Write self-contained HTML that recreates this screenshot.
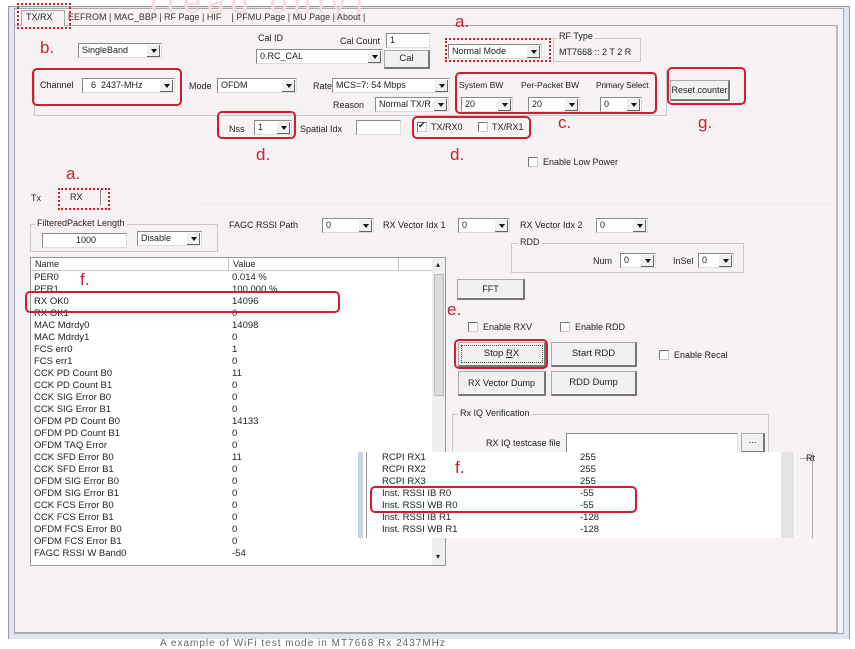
<!DOCTYPE html>
<html><head><meta charset="utf-8"><style>
*{box-sizing:border-box;margin:0;padding:0}
body{width:855px;height:644px;overflow:hidden;background:#fff;font-family:"Liberation Sans",sans-serif;font-size:9px;color:#222;position:relative}
.a{position:absolute;white-space:nowrap}
.cb{position:absolute;background:#fff;border:1px solid #8a8a8a;border-right-color:#ddd;border-bottom-color:#ddd;height:15px;font-size:9px;line-height:13px;padding-left:3px;overflow:hidden;white-space:nowrap}
.cb:after{content:"";position:absolute;right:1px;top:1px;width:12px;height:11px;background:#f0f0f0;border-right:1px solid #666;border-bottom:1px solid #666}
.cb:before{content:"";position:absolute;right:4px;top:5px;border:3px solid transparent;border-top:4px solid #111;z-index:2}
.tb{position:absolute;background:#fff;border:1px solid #8a8a8a;border-right-color:#ddd;border-bottom-color:#ddd;height:15px;font-size:9px;line-height:13px;padding:0 3px}
.bt{position:absolute;background:#f2f0f1;border:1px solid #aaa;border-right:2px solid #777;border-bottom:2px solid #777;text-align:center;font-size:9.5px;white-space:nowrap}
.gb{position:absolute;border:1px solid #c8c8c8}
.gl{position:absolute;background:#f7f3f5;padding:0 2px;font-size:9px;white-space:nowrap}
.ck{position:absolute;width:10px;height:10px;border:1px solid #777;border-right-color:#ccc;border-bottom-color:#ccc;background:#fff}
.r{position:absolute;border:2px solid #cc2030;border-radius:5px}
.rd{position:absolute;border:2px dotted #cc2030}
.lt{position:absolute;color:#cc2030;font-size:17px;font-family:"Liberation Sans",sans-serif}
.row{position:absolute;height:12px;line-height:12px;font-size:9.5px;white-space:nowrap}
</style></head><body>
<div class="a" style="left:8px;top:6px;width:842px;height:634px;background:#dfe6ef;border:1px solid #999"></div>
<div class="a" style="left:14px;top:8px;width:830px;height:626px;background:#f7f3f5;border:1px solid #aaa"></div>
<div class="a" style="left:14px;top:25px;width:824px;height:608px;border:1px solid #a8a8a8;border-right:2px solid #bbb"></div>
<div class="a" style="left:0;top:0;width:855px;height:6px;background:#fff"></div>
<div class="a" style="left:150px;top:-16px;font-size:32px;color:#f6dede;letter-spacing:6px">(read only)</div>
<div class="a" style="left:21px;top:10px;width:44px;height:16px;background:#f7f3f5;border:1px solid #aaa;border-bottom:none"></div>
<div class="a" style="left:26px;top:12px;font-size:9px">TX/RX</div>
<div class="a" style="left:68px;top:12px;font-size:9px;color:#333">EEFROM | MAC_BBP | RF Page | HIF &nbsp;&nbsp; | PFMU Page | MU Page | About |</div>
<div class="rd" style="left:17px;top:3px;width:54px;height:26px"></div>
<div class="lt" style="left:40px;top:38px">b.</div>
<div class="cb" style="left:78px;top:43px;width:84px">SingleBand</div>
<div class="a" style="left:258px;top:33px">Cal ID</div>
<div class="cb" style="left:256px;top:49px;width:127px">0.RC_CAL</div>
<div class="a" style="left:340px;top:36px">Cal Count</div>
<div class="tb" style="left:386px;top:33px;width:44px">1</div>
<div class="bt" style="left:384px;top:50px;width:46px;height:19px;line-height:16px">Cal</div>
<div class="lt" style="left:455px;top:12px">a.</div>
<div class="cb" style="left:448px;top:44px;width:94px">Normal Mode</div>
<div class="rd" style="left:445px;top:38px;width:106px;height:24px"></div>
<div class="gb" style="left:553px;top:38px;width:88px;height:24px"></div>
<div class="gl" style="left:557px;top:31px">RF Type</div>
<div class="a" style="left:559px;top:47px">MT7668 :: 2 T 2 R</div>
<div class="gb" style="left:34px;top:70px;width:633px;height:46px;border-top:none"></div>
<div class="a" style="left:40px;top:80px">Channel</div>
<div class="cb" style="left:82px;top:78px;width:93px">&nbsp; 6 &nbsp;2437-MHz</div>
<div class="r" style="left:32px;top:68px;width:150px;height:38px"></div>
<div class="a" style="left:189px;top:81px">Mode</div>
<div class="cb" style="left:217px;top:78px;width:80px">OFDM</div>
<div class="a" style="left:313px;top:81px">Rate</div>
<div class="cb" style="left:332px;top:78px;width:118px">MCS=7: 54 Mbps</div>
<div class="a" style="left:333px;top:100px">Reason</div>
<div class="cb" style="left:375px;top:97px;width:74px">Normal TX/R</div>
<div class="a" style="left:459px;top:80px;font-size:8.5px">System BW</div>
<div class="a" style="left:521px;top:80px;font-size:8.5px">Per-Packet BW</div>
<div class="a" style="left:596px;top:80px;font-size:8.5px;letter-spacing:-0.2px">Primary Select</div>
<div class="cb" style="left:461px;top:97px;width:52px">20</div>
<div class="cb" style="left:528px;top:97px;width:52px">20</div>
<div class="cb" style="left:600px;top:97px;width:42px">0</div>
<div class="r" style="left:455px;top:72px;width:202px;height:42px"></div>
<div class="lt" style="left:558px;top:113px">c.</div>
<div class="bt" style="left:670px;top:80px;width:60px;height:21px;line-height:18px;font-size:9px">Reset counter</div>
<div class="r" style="left:667px;top:67px;width:79px;height:38px"></div>
<div class="lt" style="left:698px;top:113px">g.</div>
<div class="a" style="left:229px;top:124px">Nss</div>
<div class="cb" style="left:254px;top:120px;width:38px">1</div>
<div class="r" style="left:217px;top:111px;width:79px;height:28px"></div>
<div class="lt" style="left:256px;top:145px">d.</div>
<div class="a" style="left:300px;top:124px">Spatial Idx</div>
<div class="tb" style="left:356px;top:120px;width:45px"></div>
<div class="ck" style="left:417px;top:122px"><span style="position:absolute;left:0;top:-3px;font-size:9px">✔</span></div>
<div class="a" style="left:431px;top:122px">TX/RX0</div>
<div class="ck" style="left:478px;top:122px"></div>
<div class="a" style="left:492px;top:122px">TX/RX1</div>
<div class="r" style="left:412px;top:116px;width:119px;height:23px"></div>
<div class="lt" style="left:450px;top:145px">d.</div>
<div class="ck" style="left:528px;top:157px"></div>
<div class="a" style="left:543px;top:157px">Enable Low Power</div>
<div class="a" style="left:200px;top:204px;width:630px;height:1px;background:#ece8ea"></div>
<div class="lt" style="left:66px;top:164px">a.</div>
<div class="a" style="left:31px;top:193px">Tx</div>
<div class="a" style="left:70px;top:192px">RX</div>
<div class="a" style="left:100px;top:190px;width:1px;height:15px;background:#888"></div>
<div class="rd" style="left:58px;top:188px;width:52px;height:22px"></div>
<div class="gb" style="left:30px;top:224px;width:188px;height:28px"></div>
<div class="gl" style="left:35px;top:218px">FilteredPacket Length</div>
<div class="tb" style="left:42px;top:233px;width:85px;text-align:right;padding-right:30px">1000</div>
<div class="cb" style="left:137px;top:231px;width:65px">Disable</div>
<div class="a" style="left:229px;top:220px">FAGC RSSI Path</div>
<div class="cb" style="left:322px;top:218px;width:52px">0</div>
<div class="a" style="left:383px;top:220px">RX Vector Idx 1</div>
<div class="cb" style="left:458px;top:218px;width:52px">0</div>
<div class="a" style="left:520px;top:220px">RX Vector Idx 2</div>
<div class="cb" style="left:596px;top:218px;width:52px">0</div>
<div class="gb" style="left:511px;top:243px;width:233px;height:30px"></div>
<div class="gl" style="left:518px;top:237px">RDD</div>
<div class="a" style="left:593px;top:256px">Num</div>
<div class="cb" style="left:620px;top:253px;width:36px">0</div>
<div class="a" style="left:673px;top:256px">InSel</div>
<div class="cb" style="left:698px;top:253px;width:36px">0</div>
<div class="a" style="left:30px;top:257px;width:416px;height:309px;background:#fff;border:1px solid #999"></div>
<div class="a" style="left:31px;top:258px;width:401px;height:13px;border-bottom:1px solid #ccc;background:#fff"></div>
<div class="a" style="left:228px;top:258px;width:1px;height:13px;background:#bbb"></div>
<div class="a" style="left:398px;top:258px;width:1px;height:13px;background:#bbb"></div>
<div class="a" style="left:35px;top:259px">Name</div>
<div class="a" style="left:233px;top:259px">Value</div>
<div class="a" style="left:432px;top:258px;width:13px;height:307px;background:#f0eeef"></div>
<div class="a" style="left:434px;top:274px;width:10px;height:122px;background:#ddd;border:1px solid #bbb"></div>
<div class="a" style="left:436px;top:260px;font-size:8px">▴</div>
<div class="a" style="left:436px;top:552px;font-size:8px">▾</div>
<div id="L"></div>
<div class="lt" style="left:80px;top:270px">f.</div>
<div class="r" style="left:25px;top:291px;width:315px;height:22px"></div>
<div class="bt" style="left:457px;top:279px;width:68px;height:21px;line-height:18px;font-size:9px">FFT</div>
<div class="lt" style="left:447px;top:300px">e.</div>
<div class="ck" style="left:468px;top:322px"></div>
<div class="a" style="left:483px;top:322px">Enable RXV</div>
<div class="ck" style="left:560px;top:322px"></div>
<div class="a" style="left:575px;top:322px">Enable RDD</div>
<div class="bt" style="left:458px;top:342px;width:88px;height:25px;line-height:22px">Stop <u>R</u>X</div>
<div class="a" style="left:461px;top:345px;width:82px;height:18px;border:1px dotted #555"></div>
<div class="r" style="left:454px;top:339px;width:94px;height:30px"></div>
<div class="bt" style="left:551px;top:342px;width:86px;height:25px;line-height:22px">Start RDD</div>
<div class="ck" style="left:659px;top:350px"></div>
<div class="a" style="left:674px;top:350px">Enable Recal</div>
<div class="bt" style="left:458px;top:371px;width:88px;height:25px;line-height:22px;font-size:9px">RX Vector Dump</div>
<div class="bt" style="left:551px;top:371px;width:86px;height:25px;line-height:22px">RDD Dump</div>
<div class="gb" style="left:452px;top:414px;width:317px;height:50px"></div>
<div class="gl" style="left:458px;top:408px">Rx IQ Verification</div>
<div class="a" style="left:486px;top:438px">RX IQ testcase file</div>
<div class="tb" style="left:566px;top:433px;width:172px;height:20px"></div>
<div class="bt" style="left:741px;top:433px;width:24px;height:20px;line-height:14px">...</div>
<div class="a" style="left:358px;top:452px;width:437px;height:86px;background:#fff"></div>
<div class="a" style="left:358px;top:452px;width:5px;height:86px;background:#c9d3e3"></div>
<div class="a" style="left:366px;top:452px;width:1px;height:86px;background:#999"></div>
<div class="a" style="left:781px;top:452px;width:13px;height:86px;background:#e4e2e3"></div>
<div class="a" style="left:812px;top:452px;width:1px;height:86px;background:#aaa"></div>
<div class="a" style="left:800px;top:458px;width:12px;height:1px;background:#aaa"></div>
<div class="a" style="left:806px;top:453px">Rt</div>
<div id="O"></div>
<div class="lt" style="left:455px;top:458px">f.</div>
<div class="r" style="left:370px;top:486px;width:267px;height:27px"></div>
<div class="a" style="left:0;top:639px;width:855px;height:5px;background:#fff"></div>
<div class="a" style="left:160px;top:638px;font-size:10px;color:#666;letter-spacing:1px">A example of WiFi test mode in MT7668 Rx 2437MHz</div>
<script>
var n=["PER0","PER1","RX OK0","RX OK1","MAC Mdrdy0","MAC Mdrdy1","FCS err0","FCS err1","CCK PD Count B0","CCK PD Count B1","CCK SIG Error B0","CCK SIG Error B1","OFDM PD Count B0","OFDM PD Count B1","OFDM TAQ Error","CCK SFD Error B0","CCK SFD Error B1","OFDM SIG Error B0","OFDM SIG Error B1","CCK FCS Error B0","CCK FCS Error B1","OFDM FCS Error B0","OFDM FCS Error B1","FAGC RSSI W Band0","FAGC RSSI W Band1"];
var v=["0.014 %","100.000 %","14096","0","14098","0","1","0","11","0","0","0","14133","0","0","11","0","0","0","0","0","0","0","-54","0"];
var h="";for(var i=0;i<n.length;i++){var t=272+i*12;if(t>556)break;var hh=Math.min(12,566-t);h+='<div class="row" style="left:34px;top:'+t+'px;height:'+hh+'px;overflow:hidden">'+n[i]+'</div><div class="row" style="left:232px;top:'+t+'px;height:'+hh+'px;overflow:hidden">'+v[i]+'</div>';}
document.getElementById("L").innerHTML=h;
var n2=["RCPI RX1","RCPI RX2","RCPI RX3","Inst. RSSI IB R0","Inst. RSSI WB R0","Inst. RSSI IB R1","Inst. RSSI WB R1"],v2=["255","255","255","-55","-55","-128","-128"];
h="";for(i=0;i<7;i++){t=452+i*12;h+='<div class="row" style="left:382px;top:'+t+'px">'+n2[i]+'</div><div class="row" style="left:580px;top:'+t+'px">'+v2[i]+'</div>';}
document.getElementById("O").innerHTML=h;
</script>
</body></html>
